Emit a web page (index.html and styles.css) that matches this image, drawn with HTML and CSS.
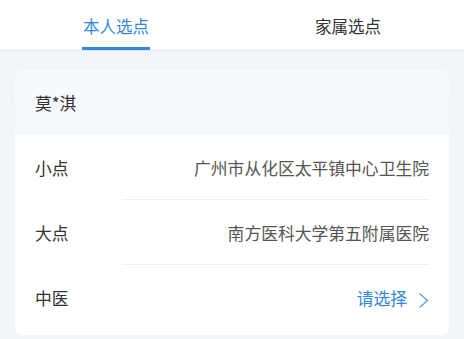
FILE: index.html
```html
<!DOCTYPE html>
<html lang="zh-CN">
<head>
  <meta charset="UTF-8" />
  <title>选点</title>
  <link rel="stylesheet" href="styles.css">
</head>
<body>
  <div class="tabs">
    <div class="tab active"><span>本人选点</span></div>
    <div class="tab"><span>家属选点</span></div>
  </div>

  <div class="card">
    <div class="card-head">莫*淇</div>
    <div class="row">
      <span class="label">小点</span>
      <span class="value">广州市从化区太平镇中心卫生院</span>
    </div>
    <div class="row">
      <span class="label">大点</span>
      <span class="value">南方医科大学第五附属医院</span>
    </div>
    <div class="row last">
      <span class="label">中医</span>
      <span class="value pick">请选择
        <svg class="arrow" width="11" height="17" viewBox="0 0 11 17"><path d="M1.5 1.5 L9.5 8.5 L1.5 15.5" fill="none" stroke="#5b9be2" stroke-width="1.2"/></svg>
      </span>
    </div>
  </div>
</body>
</html>
```

FILE: styles.css
```css
body {
  margin: 0;
  background: #f2f5f9;
  font-family: "Noto Sans CJK SC", "Noto Sans", sans-serif;
  color: #333;
}
.tabs {
  display: flex;
  height: 50px;
  background: #fff;
  box-shadow: 0 1px 1px #e6e9ee;
}
.tab {
  flex: 1;
  display: flex;
  justify-content: center;
}
.tab span {
  font-size: 16.5px;
  line-height: 20px;
  padding-top: 16px;
  height: 31px;
  box-sizing: content-box;
  color: #333;
}
.tab.active span {
  color: #2f88e0;
  border-bottom: 3px solid #2f88e0;
  padding-left: 1px;
  padding-right: 1px;
}
.card {
  margin: 20px 15px 0;
  background: #fff;
  border-radius: 8px;
  overflow: hidden;
  padding-bottom: 5px;
}
.card-head {
  height: 65px;
  display: flex;
  align-items: center;
  padding-left: 20px;
  font-size: 16.8px;
  background: linear-gradient(180deg, #f8fafd, #f5f8fc);
}
.row {
  height: 65px;
  display: flex;
  align-items: center;
  justify-content: space-between;
  padding: 0 20px;
  position: relative;
  font-size: 16.8px;
}
.row::after {
  content: "";
  position: absolute;
  left: 107px;
  right: 20px;
  bottom: 0;
  height: 1px;
  background: #eeeff2;
}
.row.last::after {
  display: none;
}
.label {
  color: #333;
}
.value {
  color: #555;
}
.pick {
  color: #2f88e0;
  display: flex;
  align-items: center;
}
.arrow {
  margin-left: 11px;
  margin-top: 6px;
}
```
